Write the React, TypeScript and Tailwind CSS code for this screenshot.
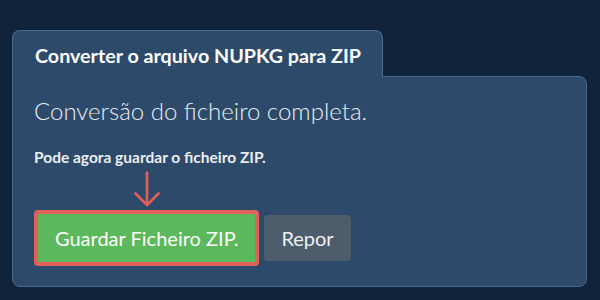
export default function App() {
  return (
    <div
      className="w-[600px] h-[300px] bg-[#11233a] pt-[30px] pl-[12px] pr-[13px]"
      style={{ fontFamily: 'Lato, "Open Sans", sans-serif' }}
    >
      <div className="relative z-10 -mb-px w-[371px] h-[47px] bg-[#2d4a6a] border border-b-0 border-[#4b6a8c] rounded-t-lg pl-[22px] pt-[13px]">
        <h2 className="text-[19.7px] leading-[1.2] font-bold text-white">
          Converter o arquivo NUPKG para ZIP
        </h2>
      </div>
      <div className="h-[211px] bg-[#2d4a6a] border border-[#4b6a8c] rounded-b-lg rounded-tr-lg pl-[21px] pt-[20px]">
        <h3 className="text-[24px] leading-[1.2] font-light text-[#e9edf2]">
          Conversão do ficheiro completa.
        </h3>
        <p className="mt-[22px] text-[15.5px] leading-[1.2] font-bold text-[#e9edf2]">
          Pode agora guardar o ficheiro ZIP.
        </p>
        <div className="flex items-end gap-[5px]">
          <div className="flex flex-col items-center">
            <svg
              width="26"
              height="36"
              viewBox="0 0 26 36"
              className="mt-[5px] mb-[3px]"
              fill="none"
              stroke="#e0605a"
              strokeWidth="2.6"
              strokeLinecap="round"
              strokeLinejoin="round"
            >
              <path d="M13 1.5 V34" />
              <path d="M1.5 22.5 L13 34 L24.5 22.5" />
            </svg>
            <button className="h-[56px] px-[17px] bg-[#5cb85c] border-4 border-[#e0605a] rounded-[4px] text-white text-[20px] leading-none">
              Guardar Ficheiro ZIP.
            </button>
          </div>
          <button className="mb-[5px] h-[46px] px-[17px] bg-[#4e5d6c] rounded-[4px] text-[#eef0f2] text-[20px] leading-none">
            Repor
          </button>
        </div>
      </div>
    </div>
  );
}
